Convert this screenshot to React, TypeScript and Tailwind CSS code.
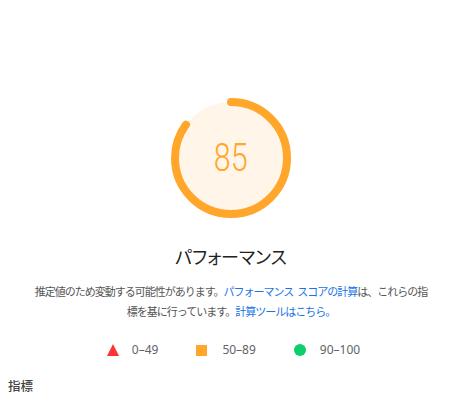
const JP = "font-['Noto_Sans_CJK_JP','Noto_Sans',sans-serif]";

function Gauge({ score }: { score: number }) {
  const r = 56;
  const c = 2 * Math.PI * r;
  return (
    <div className="relative w-[120px] h-[120px]">
      <svg viewBox="0 0 120 120" className="w-[120px] h-[120px] -rotate-90">
        <circle cx="60" cy="60" r={r} fill="#fff5e8" />
        <circle
          cx="60"
          cy="60"
          r={r}
          fill="none"
          stroke="#ffa62b"
          strokeWidth="8"
          strokeLinecap="round"
          strokeDasharray={`${(c * score) / 100} ${c}`}
        />
      </svg>
      <div className="absolute inset-0 flex items-center justify-center">
        <span className="font-['Roboto',sans-serif] font-light text-[39px] leading-none text-[#ffa62b] scale-x-[0.78]">
          {score}
        </span>
      </div>
    </div>
  );
}

export default function App() {
  return (
    <div className="w-[462px] min-h-screen bg-white pt-[98px]">
      <div className="flex flex-col items-center">
        <Gauge score={85} />
        <h2 className={`${JP} [font-feature-settings:'palt'] mt-[26px] text-[18px] leading-6 text-[#212121]`}>
          パフォーマンス
        </h2>
        <p className={`${JP} mt-[13px] w-[400px] text-center text-[11px] tracking-[-1px] leading-5 text-[#555]`}>
          推定値のため変動する可能性があります。
          <a className="text-[#1a73e8]">
            パフォーマンス<span className="inline-block w-[4px]" />スコアの計算
          </a>
          は、これらの指
          <br />
          標を基に行っています。
          <a className="text-[#1a73e8]">計算ツールはこちら。</a>
        </p>
        <div className="mt-[21px] flex items-center gap-[38px] pl-[5px] font-['Noto_Sans',sans-serif] text-[12px] leading-4 text-[#5f6368]">
          <div className="flex items-center gap-[13px]">
            <svg width="12" height="12" viewBox="0 0 12 12">
              <polygon points="6,0 12,12 0,12" fill="#ff3333" />
            </svg>
            <span>0–49</span>
          </div>
          <div className="flex items-center gap-[15px]">
            <span className="w-[11px] h-[11px] bg-[#ffa62b]" />
            <span>50–89</span>
          </div>
          <div className="flex items-center gap-[14px]">
            <span className="w-[12px] h-[12px] rounded-full bg-[#0cce6b]" />
            <span>90–100</span>
          </div>
        </div>
      </div>
      <div className={`${JP} mt-[19px] pl-2 text-[12.5px] leading-[18px] font-medium text-[#424242]`}>指標</div>
    </div>
  );
}
